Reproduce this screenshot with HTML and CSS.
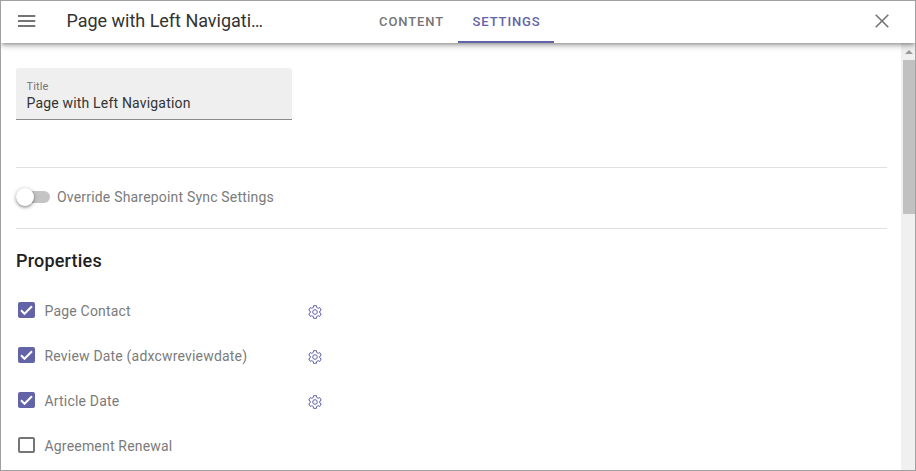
FILE: index.html
```
<!DOCTYPE html>
<html lang="en">
<head>
<meta charset="utf-8">
<title>Page settings</title>
<link rel="stylesheet" href="styles.css">
</head>
<body>
<svg class="defs" aria-hidden="true">
  <symbol id="gear" viewBox="0 0 14 14">
    <path d="M5.540 .66H8.460L8.600 2.370 10.210 3.300 11.750 2.570 13.200 5.100 11.810 6.070V7.930L13.200 8.900 11.750 11.430 10.210 10.700 8.600 11.630 8.460 13.340H5.540L5.400 11.630 3.790 10.700 2.250 11.430.8 8.900 2.190 7.930V6.070L.8 5.100 2.250 2.570 3.790 3.300 5.400 2.370z"/>
    <circle cx="7" cy="7" r="2.300"/>
  </symbol>
  <symbol id="check" viewBox="0 0 17 16">
    <path d="M3 8.300l3.500 3.500L14 4.200"/>
  </symbol>
</svg>
<div class="window">
  <header class="bar">
    <svg class="menu" viewBox="0 0 18 12"><path d="M0 1h17.300M0 6h17.300M0 11h17.300"/></svg>
    <h1 class="page-title">Page with Left Navigati…</h1>
    <nav class="tabs">
      <a class="tab">CONTENT</a>
      <a class="tab active">SETTINGS</a>
    </nav>
    <svg class="close" viewBox="0 0 14 14"><path d="M.7.7l12.600 12.600M13.300.7L.7 13.300"/></svg>
  </header>
  <div class="body">
    <main class="content">
      <div class="field">
        <label class="field-label">Title</label>
        <div class="field-value">Page with Left Navigation</div>
      </div>
      <div class="override">
        <span class="switch"><span class="thumb"></span></span>
        <span class="text">Override Sharepoint Sync Settings</span>
      </div>
      <h2 class="heading">Properties</h2>
      <div class="row"><span class="box checked"><svg><use href="#check"/></svg></span><span class="text name">Page Contact</span><svg class="gear"><use href="#gear"/></svg></div>
      <div class="row"><span class="box checked"><svg><use href="#check"/></svg></span><span class="text name">Review Date (adxcwreviewdate)</span><svg class="gear"><use href="#gear"/></svg></div>
      <div class="row"><span class="box checked"><svg><use href="#check"/></svg></span><span class="text name">Article Date</span><svg class="gear"><use href="#gear"/></svg></div>
      <div class="row"><span class="box"></span><span class="text name">Agreement Renewal</span></div>
    </main>
    <div class="scrollbar">
      <svg class="arrow" viewBox="0 0 8 4"><path d="M0 4l4-4 4 4z"/></svg>
      <div class="scroll-thumb"></div>
    </div>
  </div>
</div>
</body>
</html>
```

FILE: styles.css
```
* { box-sizing: border-box; }
body { margin: 0; font-family: Roboto, sans-serif; background: #fff; }
.defs { display: none; }
.window {
  width: 916px; height: 471px;
  border: 1px solid #a0a0a0;
  display: flex; flex-direction: column;
  overflow: hidden;
}
.bar {
  height: 42px; flex: none;
  display: flex; align-items: center;
  padding: 0 26px 0 17px;
  background: #fff;
  box-shadow: 0 2px 4px -1px rgba(0,0,0,.3), 0 3px 6px rgba(0,0,0,.22);
  z-index: 1;
}
.menu { width: 18px; height: 12px; margin-top: -2px; stroke: #757575; stroke-width: 1.8; }
.page-title {
  margin: 0 0 2px 30.500px; width: 198.500px;
  font-size: 18px; line-height: 24px; font-weight: 400; letter-spacing: -.02px;
  color: #333;
  white-space: nowrap;
}
.tabs { display: flex; align-self: stretch; margin-left: 99px; }
.tab {
  height: 42px; width: 94px; padding-left: 15px;
  font-size: 13px; font-weight: 500; letter-spacing: .9px; line-height: 41px;
  color: #757575; white-space: nowrap;
}
.tab.active { width: 96px; color: #6264a7; border-bottom: 2px solid #6264a7; padding-left: 14.500px; }
.close { width: 14px; height: 14px; margin: -2px 0 0 auto; fill: none; stroke: #757575; stroke-width: 1.6; }
.body { flex: 1; display: flex; min-height: 0; }
.content { flex: 1; padding: 25px 14px 0 15px; overflow: hidden; }
.field {
  width: 276px; height: 52px; padding: 11px 11px 0 10.500px;
  background: #efefef; border-bottom: 1px solid #8a8a8a;
  border-radius: 3px 3px 0 0;
}
.field-label { display: block; font-size: 11px; line-height: 15px; color: #757575; letter-spacing: .1px; }
.field-value { font-size: 14px; line-height: 18px; color: #333; letter-spacing: .18px; }
.override {
  margin-top: 47px; height: 62px;
  border-top: 1px solid #e0e0e0; border-bottom: 1px solid #e0e0e0;
  display: flex; align-items: center; padding-bottom: 2px;
}
.switch { width: 34px; height: 12px; border-radius: 6px; background: #c4c4c4; display: flex; align-items: center; margin-right: 7px; }
.thumb { width: 18px; height: 18px; border-radius: 50%; background: #fff; box-shadow: 0 1px 4px rgba(0,0,0,.35), 0 2px 2px rgba(0,0,0,.15); }
.text { font-size: 14px; line-height: 20px; color: #7b7b7b; letter-spacing: .19px; white-space: nowrap; }
.heading { margin: 20px 0 15px; font-size: 18px; line-height: 24px; font-weight: 500; letter-spacing: .2px; color: #212121; }
.row { height: 45px; display: flex; align-items: center; padding-left: 2px; }
.box { width: 17px; height: 16px; border: 2px solid #757575; border-radius: 2px; margin: -1px 9.500px 0 0; flex: none; }
.box.checked { border: 0; background: #6264a7; }
.box svg { display: block; width: 17px; height: 16px; fill: none; stroke: #fff; stroke-width: 2; }
.name { width: 263px; }
.gear { width: 14px; height: 14px; margin-top: 2px; fill: none; stroke: #6264a7; stroke-width: 1; stroke-linejoin: round; }
.scrollbar { width: 14px; background: #f0f0f0; padding: 7px 0 0 2px; }
.arrow { display: block; width: 8px; height: 4px; margin-left: 2px; fill: #9a9a9a; }
.scroll-thumb { height: 154px; margin-top: 6px; background: #c1c1c1; }
```
